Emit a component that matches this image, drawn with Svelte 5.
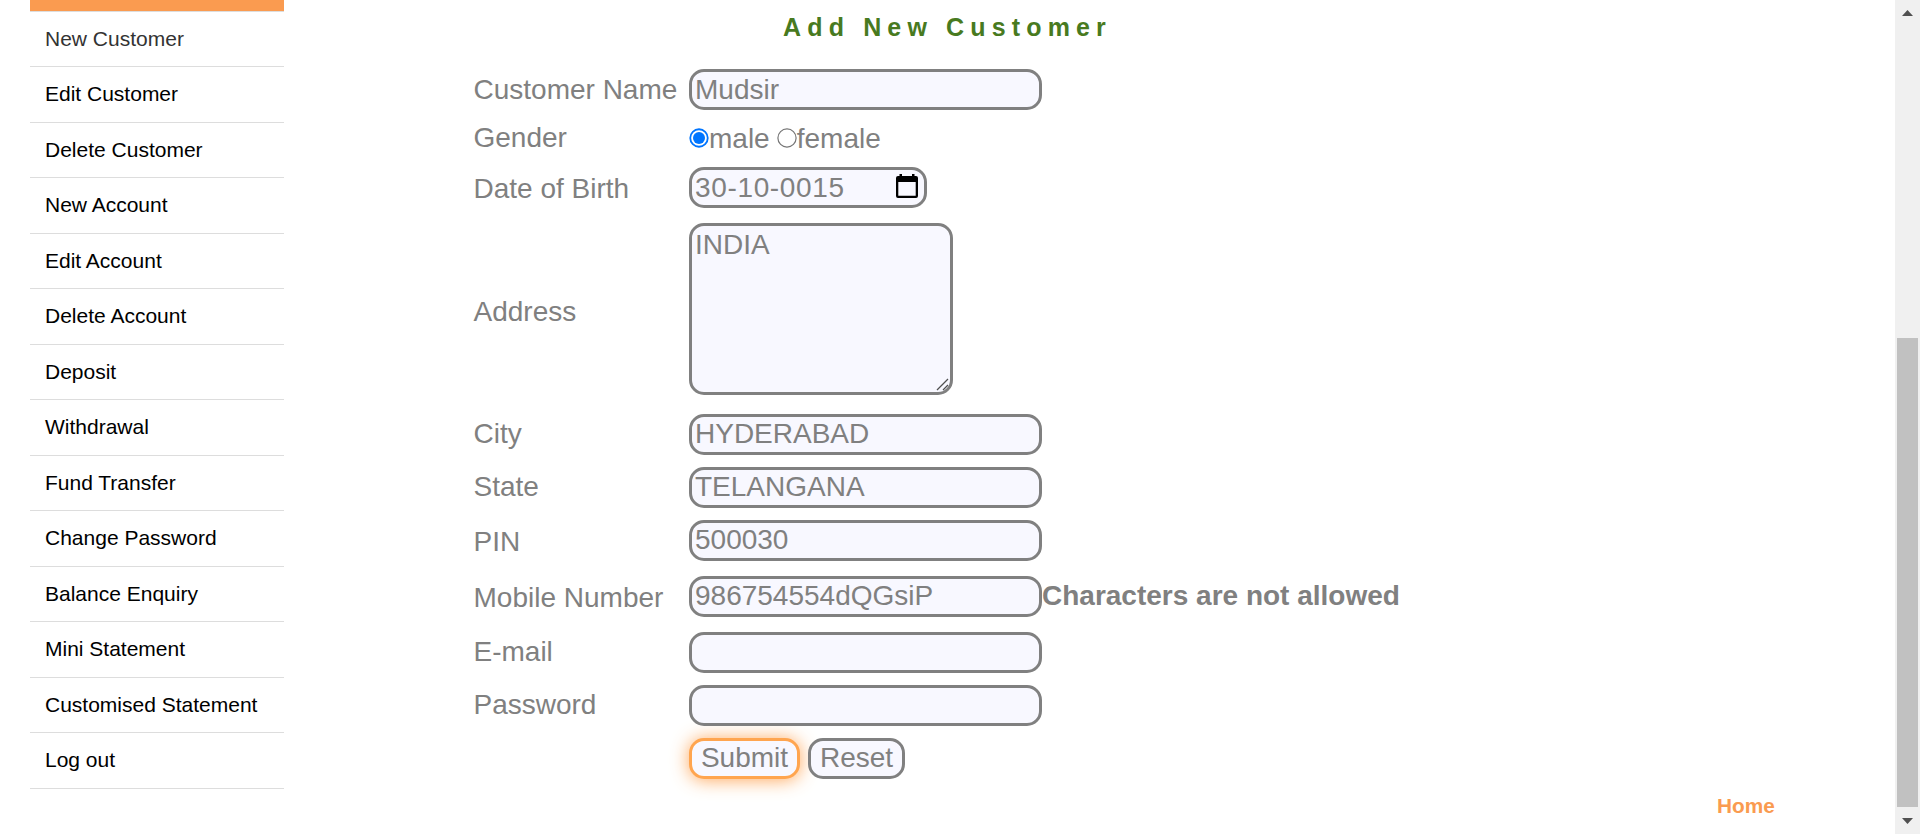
<script>
  const menu = [
    'New Customer', 'Edit Customer', 'Delete Customer', 'New Account', 'Edit Account',
    'Delete Account', 'Deposit', 'Withdrawal', 'Fund Transfer', 'Change Password',
    'Balance Enquiry', 'Mini Statement', 'Customised Statement', 'Log out'
  ];
  // gap: space above the row; shift: label offset; inset: value offset inside the field
  const rows = [
    { label: 'Customer Name', kind: 'text', value: 'Mudsir', gap: 0, shift: 5, inset: 2 },
    { label: 'Gender', kind: 'radio', gap: 10, shift: 2 },
    { label: 'Date of Birth', kind: 'date', value: '30-10-0015', gap: 13, shift: 6, inset: 2 },
    { label: 'Address', kind: 'area', value: 'INDIA', gap: 15, shift: 73, inset: 3 },
    { label: 'City', kind: 'text', value: 'HYDERABAD', gap: 19, shift: 4, inset: 1 },
    { label: 'State', kind: 'text', value: 'TELANGANA', gap: 12, shift: 4, inset: 1 },
    { label: 'PIN', kind: 'text', value: '500030', gap: 12, shift: 6, inset: 1 },
    { label: 'Mobile Number', kind: 'text', value: '986754554dQGsiP', note: 'Characters are not allowed', gap: 15, shift: 6, inset: 1 },
    { label: 'E-mail', kind: 'text', value: '', gap: 15, shift: 4, inset: 1 },
    { label: 'Password', kind: 'text', value: '', gap: 12, shift: 4, inset: 1 }
  ];
</script>

<div class="page">
  <nav>
    <div class="bar"></div>
    {#each menu as item, i}
      <a href="#top" class:current={i === 0}>{item}</a>
    {/each}
  </nav>

  <main>
    <h1>Add New Customer</h1>
    <form>
      {#each rows as r}
        <div class="row" style="margin-top:{r.gap}px">
          <span class="label" style="padding-top:{r.shift}px">{r.label}</span>
          {#if r.kind === 'radio'}
            <div class="radios">
              <svg width="20" height="20" viewBox="0 0 20 20"><circle cx="10" cy="10" r="8.75" fill="#fff" stroke="#0075ff" stroke-width="1.8" /><circle cx="10" cy="10" r="6" fill="#0075ff" /></svg>
              <span class="male">male</span>
              <svg width="20" height="20" viewBox="0 0 20 20"><circle cx="10" cy="10" r="9.1" fill="#fff" stroke="#767676" stroke-width="1.2" /></svg>
              <span>female</span>
            </div>
          {:else}
            <div class="field {r.kind}" style="padding-top:{r.inset}px">
              <span>{r.value}</span>
              {#if r.kind === 'date'}
                <svg class="cal" width="22" height="24" viewBox="0 0 22 24"><path fill="#000" fill-rule="evenodd" d="M3.5 0H6v2h10V0h2.500v2H20a2 2 0 0 1 2 2v18a2 2 0 0 1-2 2H2a2 2 0 0 1-2-2V4a2 2 0 0 1 2-2h1.500zM2.300 8v13.700h17.400V8z" /></svg>
              {:else if r.kind === 'area'}
                <svg class="grip" width="13" height="13" viewBox="0 0 13 13"><path d="M1 12L12 1M7 12l5-5" stroke="#505050" stroke-width="1.3" fill="none" /></svg>
              {/if}
            </div>
          {/if}
          {#if r.note}<b>{r.note}</b>{/if}
        </div>
      {/each}
      <div class="actions">
        <button type="button" class="submit">Submit</button>
        <button type="button" class="reset">Reset</button>
      </div>
    </form>
    <a class="home" href="#top">Home</a>
  </main>

  <aside>
    <svg width="11" height="6" viewBox="0 0 11 6"><path d="M5.500 0L11 6H0z" fill="#505050" /></svg>
    <div class="thumb"></div>
    <svg width="11" height="6" viewBox="0 0 11 6"><path d="M0 0h11L5.500 6z" fill="#505050" /></svg>
  </aside>
</div>

<style>
  :global(body) { background: #fff; overflow: hidden; }
  .page {
    display: flex;
    width: 1920px;
    height: 834px;
    overflow: hidden;
    font-family: "Liberation Sans", Arial, sans-serif;
    color: #808080;
  }
  nav { width: 254px; margin-left: 30px; flex: none; }
  .bar { height: 11px; background: #fa9b50; border-bottom: 1px solid #ddd; margin-bottom: -0.5px; }
  nav a {
    display: block;
    box-sizing: border-box;
    height: 55.53px;
    padding: 15px 15px 0;
    border-bottom: 1px solid #ddd;
    font-size: 21px;
    line-height: 24px;
    color: #000;
    text-decoration: none;
    white-space: nowrap;
  }
  nav a.current { color: #333; }
  main { flex: 1; display: flex; flex-direction: column; }
  h1 {
    margin: 13px 0 0 499px;
    height: 56px;
    font-size: 25px;
    line-height: 29px;
    letter-spacing: 6.15px;
    color: #487a1f;
    white-space: nowrap;
  }
  form { margin-left: 189.5px; font-size: 28px; line-height: 32px; white-space: nowrap; }
  .row { display: flex; align-items: flex-start; }
  .label { width: 215.5px; flex: none; box-sizing: border-box; }
  .field {
    position: relative;
    box-sizing: border-box;
    width: 353px;
    height: 41px;
    padding: 0 4px 0 3px;
    border: 3px solid #808080;
    border-radius: 15px;
    background: #f8f8ff;
    flex: none;
  }
  .date { width: 238px; display: flex; justify-content: space-between; }
  .date span { letter-spacing: 0.65px; }
  .cal { margin: 2px 2px 0 0; }
  .area { width: 264px; height: 172px; }
  .grip { position: absolute; right: 1px; bottom: 1px; }
  .radios { display: flex; height: 34px; }
  .radios svg { margin-top: 8px; flex: none; }
  .radios span { padding-top: 3px; }
  .male { margin-right: 7px; }
  .row b { padding-top: 4px; }
  .actions { display: flex; gap: 8px; margin: 12px 0 0 215.5px; }
  button {
    box-sizing: border-box;
    height: 41px;
    padding: 0 0 2px;
    border: 3px solid #808080;
    border-radius: 15px;
    background: #f8f8ff;
    color: #808080;
    font: 28px/32px "Liberation Sans", Arial, sans-serif;
  }
  .submit { width: 111px; border-color: #ffa54f; box-shadow: 0 1px 18px rgba(255, 150, 60, 0.85); }
  .reset { width: 97px; }
  .home {
    margin: 15px 0 0 1433px;
    font-size: 20.8px;
    line-height: 24px;
    font-weight: bold;
    color: #fa9b50;
    text-decoration: none;
  }
  aside {
    width: 25px;
    flex: none;
    box-sizing: border-box;
    background: #f0f0f0;
    display: flex;
    flex-direction: column;
    align-items: center;
    padding: 10px 0;
  }
  .thumb { width: 21px; height: 469px; margin: 322px 0 11px; background: #c1c1c1; flex: none; }
</style>
